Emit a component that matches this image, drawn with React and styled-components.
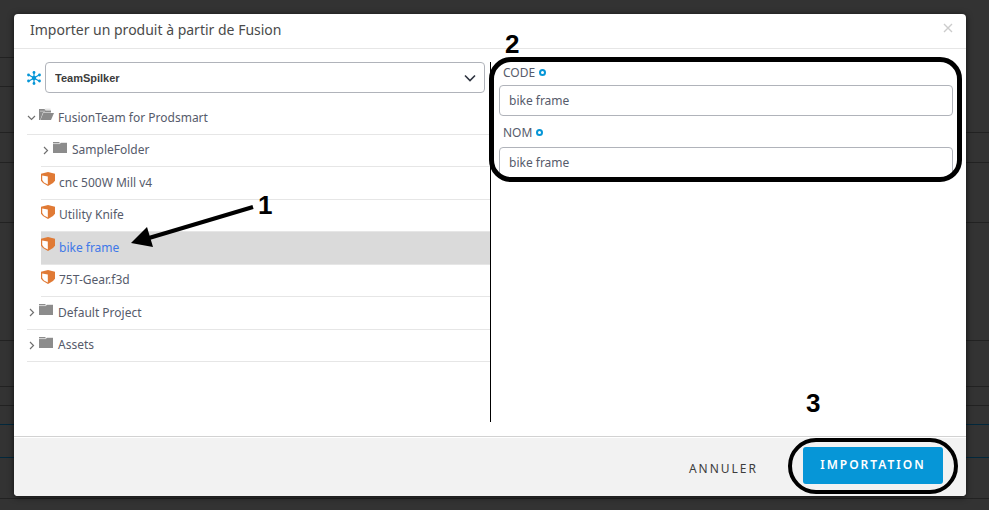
import React, { useState } from "react";
import styled, { createGlobalStyle, css } from "styled-components";

const GlobalStyle = createGlobalStyle`
  *, *::before, *::after { box-sizing: border-box; }
  body {
    margin: 0;
    background: #333333;
    color: #565b6b;
    font-family: "Noto Sans", "Open Sans", sans-serif;
    font-size: 12px;
    line-height: 16px;
  }
  button, input, select { font: inherit; color: inherit; }
`;

const Page = styled.div`
  display: grid;
  min-height: 100vh;
  overflow: hidden;
`;

const Backdrop = styled.div`
  grid-area: 1 / 1;
  display: flex;
  flex-direction: column;
`;

const BackdropRow = styled.div`
  height: ${(p) => p.$height}px;
  width: ${(p) => (p.$short ? "50%" : "100%")};
  border-bottom: 1px solid ${(p) => (p.$accent ? "#02283c" : "#222222")};
`;

const Dialog = styled.section`
  grid-area: 1 / 1;
  align-self: start;
  position: relative;
  margin: 14px 23px 14px 14px;
  background: #ffffff;
  border-radius: 4px;
  box-shadow: 0 1px 6px rgba(0, 0, 0, 0.7);
`;

const Header = styled.header`
  display: flex;
  align-items: center;
  justify-content: space-between;
  height: 35px;
  padding: 0 12px 2px 16px;
  border-bottom: 1px solid #e6e6e6;
`;

const Title = styled.h1`
  margin: 0;
  font-size: 14px;
  line-height: 20px;
  font-weight: 400;
  color: #4a4a4a;
`;

const CloseButton = styled.button`
  display: flex;
  padding: 0;
  margin-bottom: 4px;
  border: 0;
  background: none;
  color: #cccccc;
`;

const Body = styled.div`
  display: grid;
  grid-template-columns: minmax(0, 464px) minmax(0, 1fr);
  padding: 13px 13px 14px;
`;

const Source = styled.div`
  min-height: 360px;
  border-right: 1px solid #000000;
`;

const HubBar = styled.div`
  display: flex;
  align-items: center;
  gap: 4px;
  padding-right: 5px;
  margin-bottom: 9px;
`;

const SelectBox = styled.div`
  display: grid;
  flex: 1;
  align-items: center;
  > * { grid-area: 1 / 1; }
  > svg { justify-self: end; margin-right: 8px; pointer-events: none; }
`;

const HubSelect = styled.select`
  appearance: none;
  width: 100%;
  height: 31px;
  padding: 0 32px 0 9px;
  border: 1px solid #b0b3ba;
  border-radius: 4px;
  background: #ffffff;
  color: #3c3c3c;
  font-family: "Liberation Sans", Arial, sans-serif;
  font-size: 11px;
  font-weight: 700;
`;

const Tree = styled.ul`
  display: flex;
  flex-direction: column;
  height: 260px;
  margin: 0;
  padding: 0;
  list-style: none;
`;

const TreeItem = styled.li`
  position: relative;
  display: flex;
  flex: 1;
  margin-left: ${(p) => (p.$nested ? 14 : 0)}px;
  border-bottom: 1px solid #e6e6e6;
  ${(p) => p.$selected && css`
    background: #dadada;
    color: #3f78e8;
  `}
`;

const TreeButton = styled.button`
  display: flex;
  align-items: center;
  width: 100%;
  padding: 0;
  border: 0;
  background: none;
  text-align: left;
`;

const IconSlot = styled.span`
  display: flex;
  margin-right: ${(p) => p.$gap}px;
  padding-bottom: ${(p) => p.$lift}px;
`;

const Fields = styled.form`
  position: relative;
  align-self: start;
  display: grid;
  margin-left: 8px;
`;

const FieldLabel = styled.label`
  display: flex;
  align-items: center;
  gap: 4px;
  height: ${(p) => p.$height}px;
  padding: 0 0 2px 4px;
`;

const SecondLabel = styled(FieldLabel)`
  padding: 2px 0 0 4px;
`;

const Required = styled.span`
  width: 7px;
  height: 7px;
  border: 2px solid #0696d7;
  border-radius: 50%;
`;

const TextInput = styled.input`
  width: 100%;
  height: 31px;
  padding: 0 9px 1px;
  border: 1px solid #b0b3ba;
  border-radius: 4px;
  background: #ffffff;
`;

const Footer = styled.footer`
  display: flex;
  align-items: flex-start;
  justify-content: flex-end;
  gap: 25px;
  height: 60px;
  padding: 10px 23px 0;
  border-top: 1px solid #d2d2d2;
  border-radius: 0 0 4px 4px;
  background: #f2f2f2;
  box-shadow: inset 0 1px 0 #ffffff;
`;

const CancelButton = styled.button`
  height: 44px;
  padding: 0 20px;
  border: 0;
  background: none;
  color: #3c3c3c;
  letter-spacing: 2px;
`;

const ImportSlot = styled.div`
  position: relative;
`;

const ImportButton = styled.button`
  width: 140px;
  height: 37px;
  padding: 0 0 2px;
  border: 0;
  border-radius: 3px;
  background: #0696d7;
  color: #ffffff;
  font-weight: 600;
  letter-spacing: 2px;
`;

const Outline = styled.span`
  position: absolute;
  pointer-events: none;
  border: ${(p) => p.$stroke}px solid #000000;
  border-radius: ${(p) => p.$radius}px;
`;

const FieldsOutline = styled(Outline)`
  inset: -5px -9px -4px -10px;
`;

const ImportOutline = styled(Outline)`
  inset: -9px -15px -10px -15px;
`;

const StepNumber = styled.span`
  position: absolute;
  top: ${(p) => p.$top}px;
  left: ${(p) => p.$left}px;
  color: #000000;
  font: 700 26px/26px "Liberation Sans", Arial, sans-serif;
  pointer-events: none;
`;

const Arrow = styled.svg`
  position: absolute;
  z-index: 1;
  left: 90px;
  top: -29px;
  pointer-events: none;
`;

const HubIcon = () => (
  <svg width="14" height="14" viewBox="0 0 14 14" stroke="#0696d7" fill="#0696d7" aria-hidden="true">
    <path d="M7 1.5v11M2 4l10 6M2 10l10-6" strokeWidth="1.2" />
    <circle cx="7" cy="7" r="2.2" stroke="none" />
    {[[7, 1.5], [7, 12.5], [1.5, 4], [12.5, 4], [1.5, 10], [12.5, 10]].map(([x, y]) => (
      <circle key={x + "-" + y} cx={x} cy={y} r="1.4" stroke="none" />
    ))}
  </svg>
);

const Chevron = ({ open }) => (
  <svg width="9" height="9" viewBox="0 0 9 9" fill="none" stroke="#707070" strokeWidth="1.2" aria-hidden="true">
    <path d={open ? "M1 3l3.5 3.5L8 3" : "M3 1l3.5 3.5L3 8"} />
  </svg>
);

const FolderIcon = ({ open }) => (
  <svg width="15" height="13" viewBox="0 0 15 13" aria-hidden="true">
    {open ? (
      <>
        <path d="M0 1h5.5l1 1.5H12v2H4L1.2 12H0z" fill="#8a8a8a" />
        <path d="M1 3.2h5M6 1.2h5.5" stroke="#d0d0d0" strokeWidth=".8" />
        <path d="M4.3 5H15l-3 7H1.4z" fill="#8a8a8a" />
      </>
    ) : (
      <>
        <path d="M0 1h6.5v1H14v10H0z" fill="#8c8c8c" />
        <path d="M0 2.6h7L8 1.5h6" fill="none" stroke="#e2e2e2" strokeWidth=".9" />
      </>
    )}
  </svg>
);

const PartIcon = () => (
  <svg width="14" height="14" viewBox="0 0 14 14" aria-hidden="true">
    <path d="M0 1.7L7 0l7 1.7v7L12 11l-5 3-5-3-2-2.3z" fill="#e07a35" />
    <path d="M1.2 3.5L6.8 4.6v7.8L3 10.4 1.2 8z" fill="#ffffff" />
  </svg>
);

const backdropRows = [
  { height: 58, short: true }, { height: 29, short: true }, { height: 46 }, { height: 30 },
  { height: 60 }, { height: 118 }, { height: 46 }, { height: 19 },
  { height: 19, accent: true }, { height: 33, accent: true }, { height: 41 },
];

const items = [
  { name: "FusionTeam for Prodsmart", kind: "folder", open: true },
  { name: "SampleFolder", kind: "folder", nested: true },
  { name: "cnc 500W Mill v4", kind: "part", nested: true },
  { name: "Utility Knife", kind: "part", nested: true },
  { name: "bike frame", kind: "part", nested: true, step: 1 },
  { name: "75T-Gear.f3d", kind: "part", nested: true },
  { name: "Default Project", kind: "folder" },
  { name: "Assets", kind: "folder" },
];

function StepOne() {
  return (
    <>
      <Arrow width="124" height="46" viewBox="0 0 124 46" aria-hidden="true">
        <path d="M122 4L18 35" stroke="#000000" strokeWidth="4" />
        <path d="M0 40L16 24l6 20z" fill="#000000" />
      </Arrow>
      <StepNumber $top={-40} $left={217}>1</StepNumber>
    </>
  );
}

function TreeRow({ item, selected, onSelect }) {
  const folder = item.kind === "folder";
  return (
    <TreeItem $nested={item.nested} $selected={selected}>
      <TreeButton type="button" aria-expanded={folder ? Boolean(item.open) : undefined} onClick={onSelect}>
        {folder && <IconSlot $gap={3} $lift={0}><Chevron open={item.open} /></IconSlot>}
        <IconSlot $gap={4} $lift={folder ? 6 : 7}>
          {folder ? <FolderIcon open={item.open} /> : <PartIcon />}
        </IconSlot>
        {item.name}
      </TreeButton>
      {item.step && <StepOne />}
    </TreeItem>
  );
}

export default function App() {
  const [selected, setSelected] = useState("bike frame");
  return (
    <Page>
      <GlobalStyle />
      <Backdrop aria-hidden="true">
        {backdropRows.map((row, i) => (
          <BackdropRow key={i} $height={row.height} $short={row.short} $accent={row.accent} />
        ))}
      </Backdrop>
      <Dialog role="dialog" aria-labelledby="dialog-title">
        <Header>
          <Title id="dialog-title">Importer un produit à partir de Fusion</Title>
          <CloseButton type="button" aria-label="Fermer">
            <svg width="12" height="12" viewBox="0 0 12 12" stroke="currentColor" strokeWidth="1.4">
              <path d="M2 2l8 8M10 2l-8 8" />
            </svg>
          </CloseButton>
        </Header>
        <Body>
          <Source>
            <HubBar>
              <HubIcon />
              <SelectBox>
                <HubSelect aria-label="Hub">
                  <option>TeamSpilker</option>
                </HubSelect>
                <svg width="14" height="10" viewBox="0 0 14 10" fill="none" stroke="#2f3440" strokeWidth="1.6">
                  <path d="M2 2.5l5 5 5-5" />
                </svg>
              </SelectBox>
            </HubBar>
            <Tree>
              {items.map((item) => (
                <TreeRow
                  key={item.name}
                  item={item}
                  selected={item.name === selected}
                  onSelect={() => setSelected(item.name)}
                />
              ))}
            </Tree>
          </Source>
          <Fields>
            <FieldLabel htmlFor="code" $height={23}>CODE <Required /></FieldLabel>
            <TextInput id="code" defaultValue="bike frame" />
            <SecondLabel htmlFor="name" $height={31}>NOM <Required /></SecondLabel>
            <TextInput id="name" defaultValue="bike frame" />
            <FieldsOutline $stroke={5} $radius={22} />
            <StepNumber $top={-31} $left={6}>2</StepNumber>
          </Fields>
        </Body>
        <Footer>
          <CancelButton type="button">ANNULER</CancelButton>
          <ImportSlot>
            <ImportButton type="button">IMPORTATION</ImportButton>
            <ImportOutline $stroke={4} $radius={28} />
            <StepNumber $top={-57} $left={3}>3</StepNumber>
          </ImportSlot>
        </Footer>
      </Dialog>
    </Page>
  );
}
